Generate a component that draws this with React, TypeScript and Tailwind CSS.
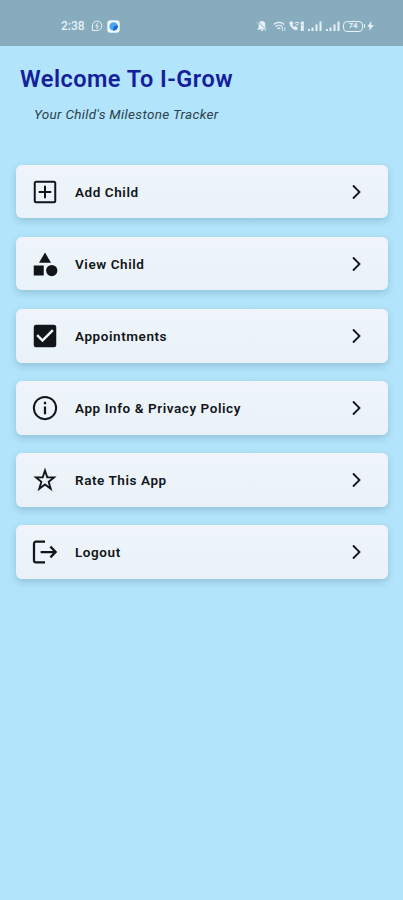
import type { ReactNode } from "react";

const menu: { id: number; title: string; icon: ReactNode }[] = [
  {
    id: 1,
    title: "Add Child",
    icon: (
      <path d="M19 3H5a2 2 0 0 0-2 2v14a2 2 0 0 0 2 2h14a2 2 0 0 0 2-2V5a2 2 0 0 0-2-2zm.4 16.4H4.6V4.6h14.8v14.8zM11.2 17h1.6v-4.2H17v-1.6h-4.2V7h-1.6v4.2H7v1.6h4.2z" />
    ),
  },
  {
    id: 2,
    title: "View Child",
    icon: (
      <>
        <path d="M12 2.8 16.8 11H7.2z" />
        <path d="M3 13.2h8v8H3z" />
        <circle cx="17.4" cy="17.2" r="4.5" />
      </>
    ),
  },
  {
    id: 3,
    title: "Appointments",
    icon: (
      <path d="M19 3H5a2 2 0 0 0-2 2v14a2 2 0 0 0 2 2h14a2 2 0 0 0 2-2V5a2 2 0 0 0-2-2zm-9 14-5-5 1.41-1.41L10 14.17l7.59-7.59L19 8l-9 9z" />
    ),
  },
  {
    id: 4,
    title: "App Info & Privacy Policy",
    icon: (
      <path d="M11.1 7h1.8v1.9h-1.8zm0 3.7h1.8V17h-1.8zM12 2.3a9.7 9.7 0 1 0 0 19.4 9.7 9.7 0 0 0 0-19.4zm0 17.8a8.1 8.1 0 1 1 0-16.2 8.1 8.1 0 0 1 0 16.2z" />
    ),
  },
  {
    id: 5,
    title: "Rate This App",
    icon: (
      <path
        fill="none"
        stroke="currentColor"
        strokeWidth="1.5"
        d="m12 4.4 1.8 5.5h5.4l-4.3 3.5 1.7 5.6-4.6-3.4-4.6 3.4 1.7-5.6-4.3-3.5h5.4z"
      />
    ),
  },
  {
    id: 6,
    title: "Logout",
    icon: (
      <path
        fill="none"
        stroke="currentColor"
        strokeWidth="1.8"
        d="M12 3.7H4.7a1.5 1.5 0 0 0-1.5 1.5v13.6a1.5 1.5 0 0 0 1.5 1.5H12M8.5 12h12M16.3 7.7l4.2 4.3-4.2 4.3"
      />
    ),
  },
];

function Signal() {
  return (
    <svg className="h-3 w-[15px]" viewBox="0 0 15 12" fill="currentColor">
      <path d="M1 9h2v2H1zM4.5 7.5h2V11h-2zM8.5 4.5h2V11h-2zM12.5 1.5h2V11h-2z" />
    </svg>
  );
}

function StatusBar() {
  return (
    <div className="flex h-[46px] items-center justify-between bg-[#86acbe] pt-[6px] pr-[29px] pl-[61px] text-[#e6f2f7]">
      <div className="flex items-center">
        <span className="w-[30px] text-[12px] leading-none font-medium">2:38</span>
        <svg className="h-3 w-3" viewBox="0 0 12 12" fill="none" stroke="currentColor">
          <path d="M1.4 10.5V6A4.7 4.7 0 1 1 6 10.5z" />
          <path d="M6.8 3 4.8 6h2.4L5.5 9" />
        </svg>
        <svg className="ml-[4px] h-[13px] w-[13px]" viewBox="0 0 13 13">
          <rect x="0.3" y="0.3" width="12.4" height="12.4" rx="3.2" fill="#f0f8fc" />
          <circle cx="6.6" cy="6.4" r="4.2" fill="#49a4ed" />
          <path d="M7 6.5 10.6 5A4.2 4.2 0 0 1 6 10.5z" fill="#1767d8" />
        </svg>
      </div>

      <div className="flex items-center">
        {/* muted bell */}
        <svg className="h-3 w-3" viewBox="0 0 12 12">
          <path d="M6 1a3.2 3.2 0 0 0-3.2 3v3L1.2 9.5h9.6L9.2 7V4A3.2 3.2 0 0 0 6 1zM5 10h2v1H5z" fill="currentColor" />
          <path d="m2 1.7 9 9" stroke="#86acbe" strokeWidth="0.9" />
          <path d="m1 2.3 8.5 8.5" stroke="currentColor" strokeWidth="0.8" />
        </svg>
        {/* wifi */}
        <svg className="ml-[5px] h-3 w-[13px]" viewBox="0 0 13 12" fill="none" stroke="currentColor" strokeWidth="1.2">
          <path d="M.8 4.5a7.5 7.5 0 0 1 10.4 0M2.7 6.7a4.8 4.8 0 0 1 6.6 0M4.5 8.7a2.2 2.2 0 0 1 3 0" />
          <path d="M9.5 7v4M11.8 7v4" strokeWidth="0.8" />
        </svg>
        {/* call over wifi */}
        <svg className="ml-[2px] h-3 w-[17px]" viewBox="0 0 17 12" fill="none" stroke="currentColor">
          <path d="M1.8 2.2c.2 4 2.8 7 7 7.6l.4-2.2-2-1-1 .8C4.9 6.6 4.3 5.6 4 4.6l.8-.8-.7-2z" fill="currentColor" />
          <path d="M6.5 3.2a4.5 4.5 0 0 1 5 0M7.7 5a2.5 2.5 0 0 1 2.6 0" />
          <path d="M14.3 1.5V11" strokeWidth="3" />
          <path d="M13.8 5h1" stroke="#86acbe" />
        </svg>
        <div className="ml-[2px] flex gap-[3px]">
          <Signal />
          <Signal />
        </div>
        <div className="ml-[3px] flex h-[11px] w-[20px] items-center justify-center rounded-[4px] border border-current text-[8px] leading-none font-bold">
          74
        </div>
        <div className="ml-px h-1 w-px bg-current" />
        <svg className="ml-[2px] h-3 w-[7px]" viewBox="0 0 7 12" fill="currentColor">
          <path d="M4.3 1 .4 6.7h2.3L2.2 11l4.6-6.100H4z" />
        </svg>
      </div>
    </div>
  );
}

export default function App() {
  return (
    <main className="min-h-screen bg-[#b2e4fb] font-['Roboto',sans-serif]">
      <StatusBar />

      {/* HEADER */}
      <header className="h-[119px] pt-[18px] pl-5">
        <h1 className="text-[23.5px] leading-[30px] font-semibold tracking-[0.48px] whitespace-nowrap text-[#14209b]">
          Welcome To I-Grow
        </h1>
        <p className="mt-[11px] ml-[14px] text-[13.5px] leading-[18px] tracking-[0.32px] whitespace-nowrap text-[#2b414c] italic">
          Your Child's Milestone Tracker
        </p>
      </header>

      {/* MENU */}
      <nav className="flex flex-col gap-[18.7px] pr-[15px] pl-4">
        {menu.map((item) => (
          <button
            key={item.id}
            className="flex h-[53.4px] items-center rounded-[6px] bg-linear-to-b from-[#eff5fa] to-[#e9f2f9] pr-[25px] pl-[14px] text-[#111418] shadow-[0_3px_7px_rgba(40,90,115,0.24)]"
          >
            <svg className="h-[30px] w-[30px]" viewBox="0 0 24 24" fill="currentColor">
              {item.icon}
            </svg>
            <span className="ml-[15px] flex-1 text-left text-[13.5px] leading-[18px] font-semibold tracking-[0.57px]">
              {item.title}
            </span>
            <svg className="h-4 w-3" viewBox="0 0 12 16" fill="none" stroke="currentColor" strokeWidth="1.8">
              <path d="m2 1.5 6.5 6.5L2 14.5" />
            </svg>
          </button>
        ))}
      </nav>
    </main>
  );
}
